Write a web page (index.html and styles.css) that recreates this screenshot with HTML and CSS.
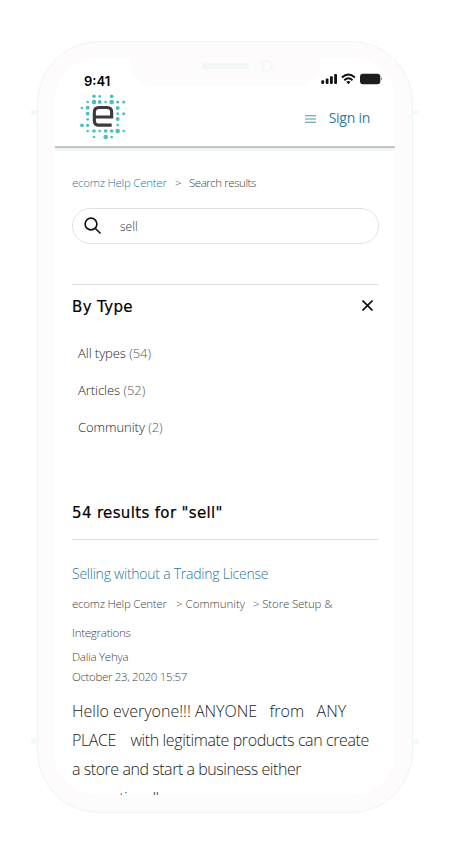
FILE: index.html
```html
<!DOCTYPE html>
<html lang="en">
<head>
<meta charset="utf-8">
<title>ecomz Help Center</title>
<link rel="stylesheet" href="styles.css">
</head>
<body>
<div class="phone">
  <i class="key key-tl"></i><i class="key key-tr"></i><i class="key key-bl"></i><i class="key key-br"></i>
  <div class="screen">
    <header class="top">
      <div class="status">
        <span class="time">9:41</span>
        <svg class="signals" width="62" height="12" viewBox="0 0 62 12">
          <g fill="#111"><rect x="0.3" y="7.3" width="2.8" height="3.6" rx="1"/><rect x="4.7" y="5.5" width="2.8" height="5.4" rx="1"/><rect x="9" y="3.2" width="2.8" height="7.7" rx="1"/><rect x="13.2" y="1" width="2.8" height="9.9" rx="1"/></g>
          <g fill="none" stroke="#111" stroke-width="1.9"><path d="M20.9 4.5Q27.4-1.6 33.9 4.5"/><path d="M23.3 7.2Q27.4 3.3 31.5 7.2"/></g>
          <path fill="#111" d="M25.2 8.8Q27.4 7 29.6 8.8L27.4 11.2Z"/>
          <rect x="39" y=".8" width="20.3" height="10.4" rx="3" fill="#1e1c1d"/><path d="M60.3 4.1Q62 5.9 60.3 7.7Z" fill="#444"/>
        </svg>
      </div>
      <div class="nav">
        <svg class="logo" width="46.67" height="47.33" viewBox="180 188 140 142">
          <g fill="#4bbfc1">
            <circle cx="222" cy="198" r="5.3"/><circle cx="239" cy="198" r="4"/><circle cx="275" cy="198" r="5.5"/>
            <circle cx="203" cy="215" r="4"/><circle cx="222" cy="215" r="7"/><circle cx="239" cy="215" r="6"/><circle cx="257" cy="215" r="4"/><circle cx="275" cy="215" r="7"/><circle cx="293" cy="215" r="4.5"/><circle cx="311" cy="215" r="4.5"/>
            <circle cx="186" cy="233" r="4"/><circle cx="203" cy="232" r="5.8"/><circle cx="293" cy="233" r="6"/>
            <circle cx="203" cy="250" r="5.8"/><circle cx="293" cy="250" r="4"/><circle cx="311" cy="250" r="4.5"/>
            <circle cx="203" cy="267" r="4"/><circle cx="293" cy="266" r="6"/>
            <circle cx="186" cy="285" r="5.8"/><circle cx="203" cy="285" r="5"/><circle cx="293" cy="284" r="4"/>
            <circle cx="203" cy="302" r="4"/><circle cx="222" cy="302" r="5.5"/><circle cx="239" cy="302" r="4"/><circle cx="257" cy="302" r="5.5"/><circle cx="275" cy="302" r="5.5"/><circle cx="293" cy="302" r="6.8"/><circle cx="311" cy="302" r="4"/>
            <circle cx="222" cy="320" r="4"/><circle cx="257" cy="320" r="7"/><circle cx="275" cy="320" r="4"/>
          </g>
          <path d="M275 284.500H237Q223 284.500 223 271V245Q223 231.500 237 231.500H261Q275 231.500 275 245V260H224" fill="none" stroke="#3b3b3d" stroke-width="9.500"/>
        </svg>
        <svg class="menu" width="11" height="8" viewBox="0 0 11 8"><path d="M0 .8H11M0 4H11M0 7.200H11" stroke="#4c94ad" stroke-width="1.1"/></svg>
        <a class="signin">Sign in</a>
      </div>
    </header>
    <main>
      <nav class="crumbs"><span class="home">ecomz Help Center</span><span class="gt">&gt;</span><span class="here">Search results</span></nav>
      <div class="search">
        <svg width="18" height="18" viewBox="0 0 18 18" fill="none" stroke="#111" stroke-width="1.6"><circle cx="7" cy="7" r="5.900"/><path d="M11.200 11.200L16.500 16.500"/></svg>
        <span>sell</span>
      </div>
      <section class="types">
        <div class="types-head"><h2>By Type</h2>
          <svg width="11" height="11" viewBox="0 0 11 11"><path d="M.5.5L10.500 10.500M10.500.5L.5 10.500" stroke="#111" stroke-width="1.6"/></svg></div>
        <ul>
          <li>All types <em>(54)</em></li>
          <li>Articles <em>(52)</em></li>
          <li>Community <em>(2)</em></li>
        </ul>
      </section>
      <h2 class="count">54 results for "sell"</h2>
      <article>
        <h3>Selling without a Trading License</h3>
        <div class="path"><span class="p1">ecomz Help Center</span><span class="p2">&gt; Community</span><span class="p3">&gt; Store Setup &amp;</span></div>
        <div class="path"><span class="p4">Integrations</span></div>
        <div class="meta author">Dalia Yehya</div>
        <div class="meta date">October 23, 2020 15:57</div>
        <div class="body">
          <div class="b1">Hello everyone!!! ANYONE &nbsp; from &nbsp; ANY</div>
          <div class="b2"><span class="place">PLACE</span> &nbsp; with legitimate products can create</div>
          <div class="b3">a store and start a business either</div>
          <div class="b4">internationally</div>
        </div>
      </article>
    </main>
  </div>
  <div class="notch"><i class="speaker"></i><i class="camera"></i></div>
</div>
</body>
</html>
```
FILE: styles.css
```css
* { box-sizing: border-box; }
body { margin: 0; background: #fff; font-family: "Open Sans", "Noto Sans", sans-serif; font-weight: 300; color: #1c1c1c; }
h2, h3, ul { margin: 0; padding: 0; font-weight: inherit; }
em { font-style: normal; color: #555; }
.phone { position: relative; width: 376px; height: 772px; margin: 41px 0 0 37px; padding: 16px 17px 17px; border: 1px solid #f0f3f3; border-radius: 62px; background: #fefbfc; }
.screen { width: 340px; height: 737px; border-radius: 42px; background: #fff; overflow: hidden; }
.key { position: absolute; width: 6px; height: 5px; background: #f3f8f8; }
.key-tl, .key-tr { top: 68px; }
.key-bl, .key-br { top: 697px; }
.key-tl, .key-bl { left: -7px; }
.key-tr, .key-br { right: -7px; }
.notch { position: absolute; left: 93px; top: 15px; width: 189px; height: 29px; border-radius: 0 0 22px 22px; background: #fefbfc; }
.speaker { position: absolute; left: 71px; top: 6px; width: 47px; height: 6px; border-radius: 3px; background: #f3f7f8; }
.camera { position: absolute; left: 130px; top: 3px; width: 12px; height: 12px; border-radius: 50%; border: 2px solid #f3f7f8; }
.top { height: 90px; border-bottom: 2px solid #c2c6c6; box-shadow: 0 2px 3px #e9eeee; }
.status { display: flex; height: 35px; align-items: flex-start; padding: 15px 12px 0 29px; }
.time { font: 600 13px/16px Inter, sans-serif; color: #000; flex: 1; }
.nav { display: flex; align-items: flex-start; padding-left: 25px; }
.logo { flex: none; }
.menu { margin: 22px 0 0 178px; }
.signin { margin: 15px 0 0 13px; font-size: 14px; line-height: 20px; font-weight: 400; letter-spacing: -.25px; color: #2f7d9c; white-space: nowrap; }
main { padding: 25px 17px 0; }
.crumbs { display: flex; height: 20px; line-height: 20px; font-size: 11.500px; color: #444; white-space: nowrap; }
.home { width: 103px; letter-spacing: -.25px; color: #1f789c; }
.gt { width: 14px; }
.here { letter-spacing: -.45px; }
.search { display: flex; align-items: center; height: 36px; width: 307px; margin-top: 15px; padding-left: 11px; border: 1.500px solid #dfe2e1; border-radius: 18px; font-size: 12px; color: #333; }
.search span { margin-left: 18px; }
.types { margin-top: 40px; width: 306px; border-top: 1px solid #dedfdf; }
.types-head { display: flex; justify-content: space-between; align-items: center; height: 41px; padding-right: 5px; }
h2 { font-family: "DejaVu Sans", sans-serif; font-weight: 400; font-size: 15px; letter-spacing: .35px; color: #000; white-space: nowrap; -webkit-text-stroke: .2px #000; }
.types-head h2 { padding-top: 2px; }
.types ul { list-style: none; padding: 8px 0 0 6px; }
.types li { height: 37.200px; line-height: 38px; font-size: 13px; letter-spacing: -.05px; white-space: nowrap; }
.count { height: 54px; line-height: 54px; margin-top: 40px; border-bottom: 1px solid #dedfdf; width: 306px; }
h3 { height: 30px; margin-top: 19px; line-height: 30px; font-size: 14px; letter-spacing: -.24px; color: #1f789c; white-space: nowrap; }
.path { display: flex; height: 29px; line-height: 29px; font-size: 11.500px; color: #444; white-space: nowrap; }
.p1 { width: 104px; letter-spacing: -.25px; }
.p2 { width: 77px; }
.p3 { letter-spacing: -.15px; }
.p4, .author { letter-spacing: -.25px; }
.meta { height: 20px; line-height: 20px; font-size: 11.500px; color: #444; }
.date { letter-spacing: -.33px; }
.body { margin-top: 10px; font-size: 16px; line-height: 29px; white-space: nowrap; }
.b2 { letter-spacing: -.38px; }
.place { margin-right: 3px; }
.b3 { letter-spacing: -.45px; }
.b4 { letter-spacing: -.6px; }
```
